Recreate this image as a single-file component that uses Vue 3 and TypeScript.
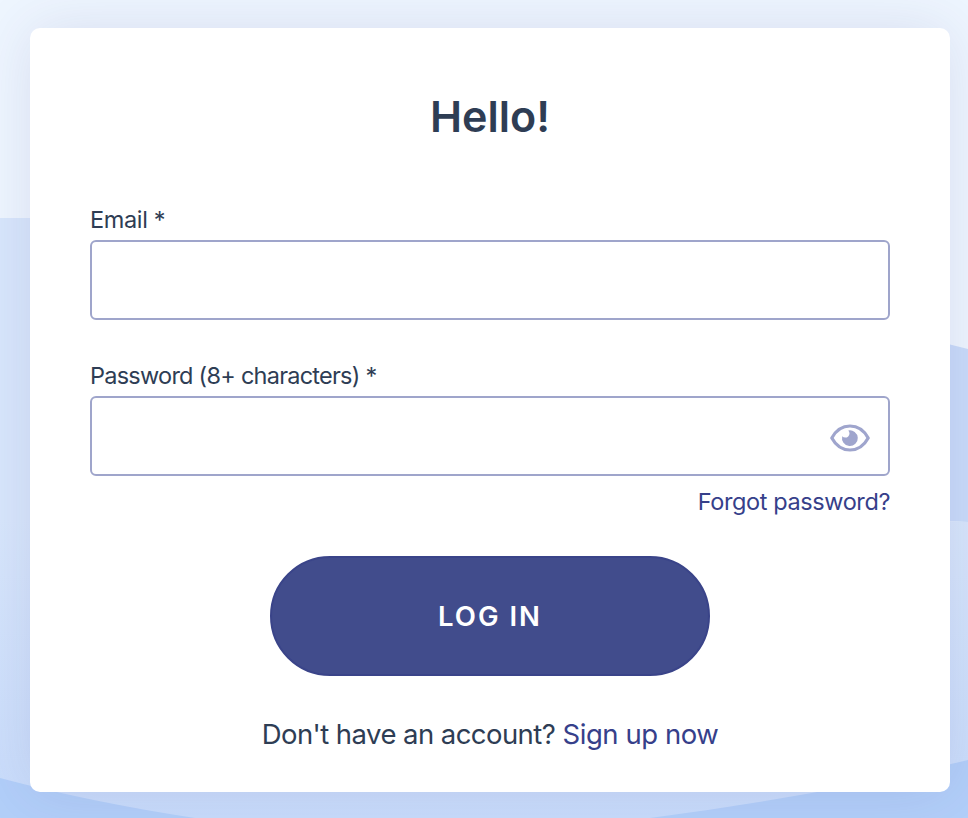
<script setup lang="ts">
import { ref } from 'vue'

const email = ref('')
const password = ref('')
const showPassword = ref(false)
</script>

<template>
  <main class="page">
    <svg class="backdrop" viewBox="0 0 968 818" preserveAspectRatio="none" aria-hidden="true">
      <defs>
        <linearGradient id="left-band" x1="0" y1="218" x2="0" y2="818" gradientUnits="userSpaceOnUse">
          <stop offset="0" stop-color="#d8e7fc" />
          <stop offset="0.5" stop-color="#d8e7fc" />
          <stop offset="1" stop-color="#c8dcfb" />
        </linearGradient>
      </defs>
      <path d="M0 218H490V818H0Z" fill="url(#left-band)" />
      <path d="M490 300Q800 304 968 349V522L490 500Z" fill="#c9dcfa" />
      <path d="M490 500L968 522V818H490Z" fill="url(#left-band)" />
      <path d="M0 778Q90 802 195 818H0Z" fill="#b2cff9" />
      <path d="M650 818Q820 796 968 760V818Z" fill="#b2cff9" />
    </svg>
    <form class="card" @submit.prevent>
      <h1>Hello!</h1>
      <div class="field">
        <label for="email"><span class="email-label">Email *</span></label>
        <input id="email" v-model="email" type="email" />
      </div>
      <div class="field password">
        <label for="password"><span class="password-label">Password (8+ characters) *</span></label>
        <div class="control">
          <input id="password" v-model="password" :type="showPassword ? 'text' : 'password'" />
          <button class="eye" type="button" @click="showPassword = !showPassword">
            <svg viewBox="0 0 40 28">
              <path d="M1.8 14C10.5-2 29.5-2 38.2 14C29.5 30 10.5 30 1.8 14Z" fill="none" stroke="#9fa5cd" stroke-width="3.2" stroke-linejoin="round" />
              <path d="M18.3 6.4A7.9 7.9 0 1 1 12.2 12.3A3.7 3.7 0 0 0 18.3 6.4Z" fill="#9fa5cd" />
            </svg>
          </button>
        </div>
      </div>
      <a class="forgot">Forgot password?</a>
      <button class="submit" type="submit">LOG IN</button>
      <p class="signup"><span class="question">Don't have an account?</span> <a>Sign up now</a></p>
    </form>
  </main>
</template>

<style>
body {
  margin: 0;
}
</style>

<style scoped>
.page {
  position: relative;
  box-sizing: border-box;
  width: 968px;
  height: 818px;
  padding: 28px 18px 26px 30px;
  overflow: hidden;
  background: #eef6ff;
  color: #2e3d54;
  font-family: Inter, "Liberation Sans", sans-serif;
}
.backdrop {
  position: absolute;
  inset: 0;
  width: 100%;
  height: 100%;
}
.card {
  position: relative;
  display: flex;
  flex-direction: column;
  box-sizing: border-box;
  height: 764px;
  padding: 58px 60px 30px;
  border-radius: 10px;
  background: #fff;
  box-shadow: 0 0 60px rgba(63, 50, 120, 0.12);
}
h1 {
  margin: 0;
  height: 60px;
  font-size: 43px;
  font-weight: 600;
  line-height: 60px;
  text-align: center;
}
.field {
  margin-top: 58px;
}
.field.password {
  margin-top: 40px;
}
label {
  display: block;
  height: 36px;
  font-size: 23.5px;
  line-height: 32px;
  white-space: nowrap;
}
.email-label {
  letter-spacing: -0.35px;
}
.password-label {
  letter-spacing: -0.75px;
}
.control {
  position: relative;
}
input {
  display: block;
  box-sizing: border-box;
  width: 100%;
  height: 80px;
  padding: 0 20px;
  border: 2px solid #9fa5cb;
  border-radius: 6px;
  outline: none;
  background: #fff;
  font: inherit;
  font-size: 24px;
}
.eye {
  position: absolute;
  top: 28px;
  right: 20px;
  width: 40px;
  height: 28px;
  padding: 0;
  border: 0;
  background: none;
}
.eye svg {
  display: block;
}
a {
  color: #36408a;
}
.forgot {
  align-self: flex-end;
  height: 32px;
  margin-top: 10px;
  font-size: 23.5px;
  letter-spacing: -0.4px;
  line-height: 31px;
}
.submit {
  flex: none;
  align-self: center;
  width: 440px;
  height: 120px;
  margin-top: 38px;
  padding: 0;
  border: 2px solid #3a4489;
  border-radius: 60px;
  background: #414c8c;
  color: #fff;
  font: inherit;
  font-size: 27.5px;
  font-weight: 600;
  letter-spacing: 2px;
}
.signup {
  margin: 38px 0 0;
  font-size: 27.5px;
  line-height: 40px;
  letter-spacing: -0.45px;
  text-align: center;
  white-space: nowrap;
}
.question {
  letter-spacing: -0.56px;
}
</style>
